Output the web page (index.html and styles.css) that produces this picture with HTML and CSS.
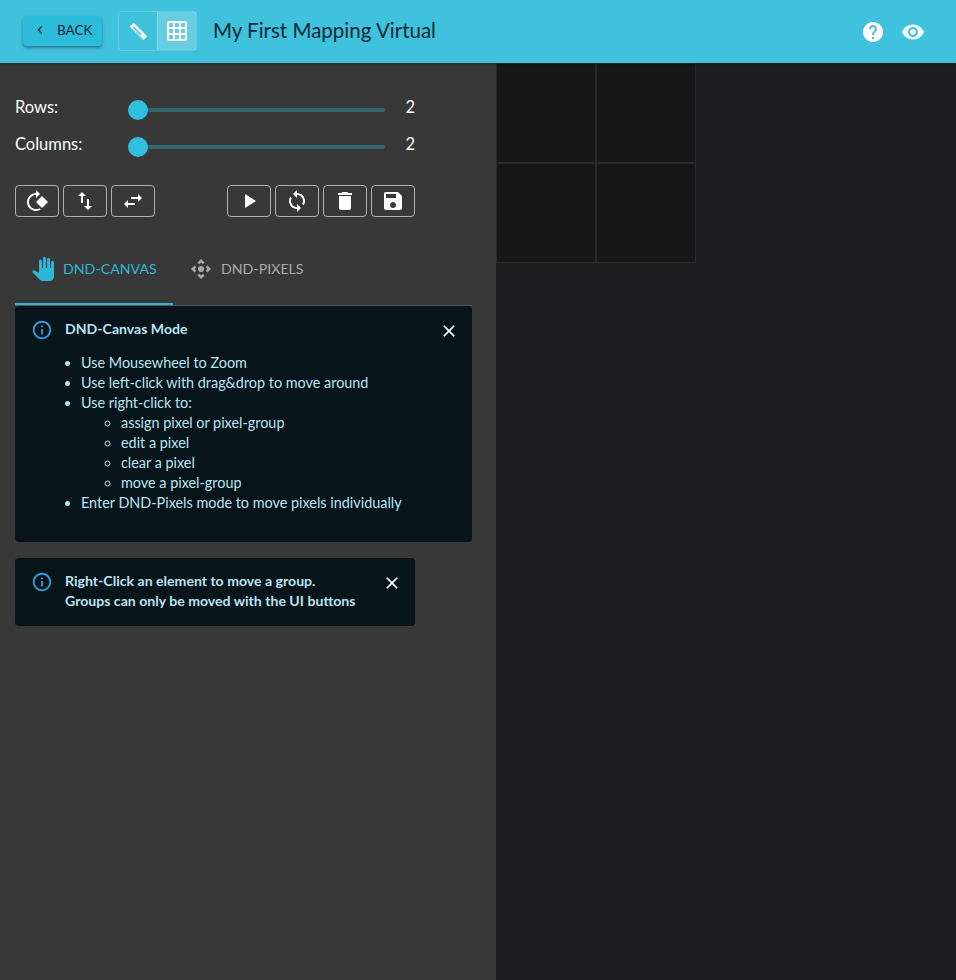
FILE: index.html
```html
<!doctype html>

<html>
    <head>
        <meta charset="utf-8">
        <title>My First Mapping Virtual</title>
        <link rel="stylesheet" href="styles.css">
    </head>
    <body>
        <header class="topbar">
            <button class="back-btn">
                <svg class="back-icon" viewBox="0 0 24 24"><path d="M15.41 7.41 14 6l-6 6 6 6 1.41-1.41L10.83 12z"/></svg>
                BACK
            </button>
            <div class="view-toggle">
                <div class="toggle-item">
                    <svg class="ruler-icon" viewBox="0 0 24 24"><path fill-rule="evenodd" d="M6.500 2 22 17.500l-4.500 4.500-1.300-1.300.9-.9-.8-.8-.9.9-1.300-1.300.9-.9-.8-.8-.9.9-1.300-1.300.9-.9-.8-.8-.9.900-1.300-1.300.9-.9-.8-.8-.9.9-1.300-1.300.9-.9-.8-.8-.9.9L2 6.500zM7 6.500 5.800 7.700l8.500 8.500 1.200-1.200z"/></svg>
                </div>
                <div class="toggle-item toggle-active">
                    <svg viewBox="0 0 24 24"><path d="M20 2H4c-1.100 0-2 .9-2 2v16c0 1.100.9 2 2 2h16c1.100 0 2-.9 2-2V4c0-1.100-.9-2-2-2zM8 20H4v-4h4v4zm0-6H4v-4h4v4zm0-6H4V4h4v4zm6 12h-4v-4h4v4zm0-6h-4v-4h4v4zm0-6h-4V4h4v4zm6 12h-4v-4h4v4zm0-6h-4v-4h4v4zm0-6h-4V4h4v4z"/></svg>
                </div>
            </div>
            <h1 class="title">My First Mapping Virtual</h1>
            <div class="topbar-right">
                <svg viewBox="0 0 24 24"><path d="M12 2C6.480 2 2 6.480 2 12s4.480 10 10 10 10-4.480 10-10S17.520 2 12 2zm1 17h-2v-2h2v2zm2.070-7.750-.9.920C13.450 12.900 13 13.500 13 15h-2v-.5c0-1.100.45-2.100 1.170-2.830l1.240-1.260c.37-.36.59-.86.59-1.410 0-1.100-.9-2-2-2s-2 .9-2 2H8c0-2.210 1.790-4 4-4s4 1.790 4 4c0 .88-.36 1.680-.93 2.250z"/></svg>
                <svg viewBox="0 0 24 24"><path d="M12 4.500C7 4.500 2.730 7.610 1 12c1.730 4.390 6 7.500 11 7.500s9.270-3.110 11-7.500c-1.730-4.390-6-7.500-11-7.500zM12 17c-2.760 0-5-2.240-5-5s2.240-5 5-5 5 2.240 5 5-2.240 5-5 5zm0-8c-1.660 0-3 1.340-3 3s1.340 3 3 3 3-1.340 3-3-1.340-3-3-3z"/></svg>
            </div>
        </header>
        <div class="main">
            <aside class="sidebar">
                <div class="slider-row">
                    <span class="slider-label">Rows:</span>
                    <div class="slider"><span class="slider-thumb"></span></div>
                    <span class="slider-value">2</span>
                </div>
                <div class="slider-row">
                    <span class="slider-label">Columns:</span>
                    <div class="slider"><span class="slider-thumb"></span></div>
                    <span class="slider-value">2</span>
                </div>
                <div class="tools">
                    <div class="tool-group">
                        <button class="tool-btn"><svg viewBox="0 0 24 24"><path d="M4.640 19.370c3.030 3.030 7.670 3.440 11.150 1.250l-1.460-1.460c-2.660 1.430-6.040 1.030-8.280-1.210-2.730-2.730-2.730-7.170 0-9.900C7.420 6.690 9.210 6.030 11 6.030V9l4-4-4-4v3.010c-2.300 0-4.610.87-6.360 2.630-3.520 3.510-3.520 9.210 0 12.730zM11 13l6 6 6-6-6-6-6 6z"/></svg></button>
                        <button class="tool-btn"><svg viewBox="0 0 24 24"><path d="M16 17.010V10h-2v7.010h-3L15 21l4-3.990h-3zM9 3 5 6.990h3V14h2V6.990h3L9 3z"/></svg></button>
                        <button class="tool-btn"><svg viewBox="0 0 24 24"><path d="M6.990 11 3 15l3.990 4v-3H14v-2H6.990v-3zM21 9l-3.990-4v3H10v2h7.010v3L21 9z"/></svg></button>
                    </div>
                    <div class="tool-group">
                        <button class="tool-btn"><svg viewBox="0 0 24 24"><path d="M8 5v14l11-7z"/></svg></button>
                        <button class="tool-btn"><svg viewBox="0 0 24 24"><path d="M12 4V1L8 5l4 4V6c3.310 0 6 2.690 6 6 0 1.010-.25 1.970-.7 2.800l1.460 1.460C19.540 15.030 20 13.570 20 12c0-4.420-3.580-8-8-8zm0 14c-3.310 0-6-2.690-6-6 0-1.010.25-1.970.7-2.800L5.240 7.740C4.460 8.970 4 10.430 4 12c0 4.420 3.580 8 8 8v3l4-4-4-4v3z"/></svg></button>
                        <button class="tool-btn"><svg viewBox="0 0 24 24"><path d="M6 19c0 1.100.9 2 2 2h8c1.100 0 2-.9 2-2V7H6v12zM19 4h-3.500l-1-1h-5l-1 1H5v2h14V4z"/></svg></button>
                        <button class="tool-btn"><svg viewBox="0 0 24 24"><path d="M17 3H5c-1.110 0-2 .9-2 2v14c0 1.100.89 2 2 2h14c1.100 0 2-.9 2-2V7l-4-4zm-5 16c-1.660 0-3-1.340-3-3s1.340-3 3-3 3 1.340 3 3-1.340 3-3 3zm3-10H5V5h10v4z"/></svg></button>
                    </div>
                </div>
                <div class="tabs">
                    <div class="tab tab-active">
                        <svg viewBox="0 0 24 24"><path d="M23 5.500V20c0 2.200-1.800 4-4 4h-7.300c-1.080 0-2.100-.43-2.850-1.190L1 14.830s1.260-1.230 1.300-1.250c.22-.19.49-.29.79-.29.22 0 .42.060.6.160.04.010 4.310 2.460 4.310 2.460V4c0-.83.670-1.500 1.500-1.500S11 3.170 11 4v7h1V1.500c0-.83.670-1.500 1.500-1.500S15 .67 15 1.500V11h1V2.500c0-.83.670-1.500 1.500-1.500s1.500.67 1.500 1.500V11h1V5.500c0-.83.670-1.500 1.500-1.500s1.500.67 1.500 1.500z"/></svg>
                        DND-CANVAS
                    </div>
                    <div class="tab">
                        <svg viewBox="0 0 24 24"><path d="M15.540 5.540 13.770 7.300 12 5.540 10.230 7.300 8.460 5.540 12 2zm2.920 10-1.760-1.770L18.460 12l-1.760-1.770 1.760-1.770L22 12zm-10 2.920 1.770-1.760L12 18.460l1.770-1.760 1.770 1.760L12 22zm-2.920-10 1.760 1.770L5.540 12l1.760 1.770-1.760 1.770L2 12z"/><circle cx="12" cy="12" r="3"/></svg>
                        DND-PIXELS
                    </div>
                </div>
                <div class="alert">
                    <svg class="alert-icon" viewBox="0 0 24 24"><path d="M11 7h2v2h-2zm0 4h2v6h-2zm1-9C6.480 2 2 6.480 2 12s4.480 10 10 10 10-4.480 10-10S17.520 2 12 2zm0 18c-4.410 0-8-3.590-8-8s3.590-8 8-8 8 3.590 8 8-3.590 8-8 8z"/></svg>
                    <div class="alert-body">
                        <div class="alert-title">DND-Canvas Mode</div>
                        <ul class="alert-list">
                            <li>Use Mousewheel to Zoom</li>
                            <li>Use left-click with drag&amp;drop to move around</li>
                            <li>Use right-click to:
                                <ul>
                                    <li>assign pixel or pixel-group</li>
                                    <li>edit a pixel</li>
                                    <li>clear a pixel</li>
                                    <li>move a pixel-group</li>
                                </ul>
                            </li>
                            <li>Enter DND-Pixels mode to move pixels individually</li>
                        </ul>
                    </div>
                    <svg class="alert-close" viewBox="0 0 24 24"><path d="M19 6.410 17.590 5 12 10.590 6.410 5 5 6.410 10.590 12 5 17.590 6.410 19 12 13.410 17.590 19 19 17.590 13.410 12z"/></svg>
                </div>
                <div class="alert alert-small">
                    <svg class="alert-icon" viewBox="0 0 24 24"><path d="M11 7h2v2h-2zm0 4h2v6h-2zm1-9C6.480 2 2 6.480 2 12s4.480 10 10 10 10-4.480 10-10S17.520 2 12 2zm0 18c-4.410 0-8-3.590-8-8s3.590-8 8-8 8 3.590 8 8-3.590 8-8 8z"/></svg>
                    <div class="alert-body alert-title">
                        Right-Click an element to move a group.<br>
                        Groups can only be moved with the UI buttons
                    </div>
                    <svg class="alert-close" viewBox="0 0 24 24"><path d="M19 6.410 17.590 5 12 10.590 6.410 5 5 6.410 10.590 12 5 17.590 6.410 19 12 13.410 17.590 19 19 17.590 13.410 12z"/></svg>
                </div>
            </aside>
            <section class="canvas-area">
                <div class="pixel-grid">
                    <div class="pixel"></div>
                    <div class="pixel"></div>
                    <div class="pixel"></div>
                    <div class="pixel"></div>
                </div>
            </section>
        </div>
    </body>
</html>
```

FILE: styles.css
```css
* { box-sizing: border-box; }
body {
    margin: 0;
    height: 980px;
    overflow: hidden;
    font-family: "Lato", "Open Sans", sans-serif;
    color: #fff;
    background: #1d1d1f;
}
svg { fill: currentColor; display: block; }
button { font-family: inherit; }

/* top bar */
.topbar {
    height: 63px;
    padding: 0 31px 0 23px;
    display: flex;
    align-items: center;
    background: #40c1dc;
    box-shadow: 0 1px 3px rgba(0, 0, 0, 0.2);
    position: relative;
}
.back-btn {
    width: 79px;
    height: 30px;
    margin-bottom: 1px;
    padding: 0 0 2px 9px;
    display: flex;
    align-items: center;
    gap: 9px;
    border: 0;
    border-radius: 4px;
    font-size: 13.5px;
    color: #0b2a35;
    background: #2cbcd9;
    box-shadow: 0 2px 3px rgba(0, 0, 0, 0.35);
}
.back-icon { width: 16px; height: 16px; }
.view-toggle {
    margin-left: 16px;
    display: flex;
    width: 79px;
    height: 40px;
    margin-bottom: 1px;
    border: 1px solid rgba(255, 255, 255, 0.18);
    border-radius: 4px;
}
.toggle-item {
    flex: 1;
    display: flex;
    align-items: center;
    justify-content: center;
}
.toggle-item svg { width: 24px; height: 24px; }
.toggle-item .ruler-icon { width: 21px; height: 21px; }
.toggle-active {
    border-left: 1px solid rgba(255, 255, 255, 0.25);
    background: rgba(255, 255, 255, 0.2);
}
.title {
    margin: 0 0 4px 16px;
    font-size: 20.5px;
    font-weight: 400;
    color: #0b2a35;
}
.topbar-right {
    margin-left: auto;
    display: flex;
    gap: 16px;
}
.topbar-right svg { width: 24px; height: 24px; }

.main {
    display: flex;
    height: 917px;
}

/* left column */
.sidebar {
    width: 496px;
    padding: 29px 24px 0 15px;
    background: #383838;
}
.slider-row {
    width: 400px;
    height: 36px;
    margin-bottom: 1px;
    display: flex;
    align-items: center;
    font-size: 16.5px;
}
.slider-label { width: 114px; margin-top: -6px; }
.slider {
    position: relative;
    width: 256px;
    height: 4px;
    border-radius: 2px;
    background: #35666f;
}
.slider-thumb {
    position: absolute;
    left: -1px;
    top: -8px;
    width: 20px;
    height: 20px;
    border-radius: 50%;
    background: #2fbfdf;
}
.slider-value { margin-left: auto; margin-top: -6px; }

.tools {
    width: 400px;
    margin-top: 20px;
    display: flex;
    justify-content: space-between;
}
.tool-group { display: flex; gap: 4px; }
.tool-btn {
    width: 44px;
    height: 32px;
    padding: 0;
    display: flex;
    align-items: center;
    justify-content: center;
    color: #fff;
    background: transparent;
    border: 1px solid rgba(255, 255, 255, 0.6);
    border-radius: 4px;
}
.tool-btn svg { width: 24px; height: 24px; }

.tabs {
    margin-top: 17px;
    width: 457px;
    height: 72px;
    display: flex;
    border-bottom: 1px solid #555;
}
.tab {
    width: 158px;
    height: 71px;
    padding: 0 0 2px 16px;
    display: flex;
    align-items: center;
    gap: 8px;
    font-size: 14.2px;
    color: #aaa;
}
.tab svg { width: 24px; height: 24px; }
.tab-active {
    padding-bottom: 0;
    color: #2fb6d6;
    border-bottom: 2px solid #2fb6d6;
}

/* info boxes */
.alert {
    width: 457px;
    padding: 13px 13px 15px 16px;
    display: flex;
    border-radius: 4px;
    font-size: 14.4px;
    line-height: 20px;
    color: #b8e4f3;
    background: #07141a;
}
.alert-icon {
    flex: none;
    width: 22px;
    height: 22px;
    color: #29a3da;
}
.alert-body { flex: 1; margin-left: 12px; }
.alert-title { font-size: 14.1px; font-weight: 700; }
.alert-list {
    margin: 14px 0;
    padding-left: 16px;
}
.alert-list ul { padding-left: 40px; }
.alert-close {
    flex: none;
    width: 20px;
    height: 20px;
    margin-top: 2px;
    color: #fff;
}
.alert-small {
    width: 400px;
    margin-top: 16px;
}

/* pixel canvas */
.canvas-area { flex: 1; overflow: hidden; }
.pixel-grid {
    width: 200px;
    display: grid;
    grid-template-columns: repeat(2, 100px);
    grid-auto-rows: 100px;
}
.pixel {
    background: #171717;
    border: 1px solid #2a2a2a;
}
```
